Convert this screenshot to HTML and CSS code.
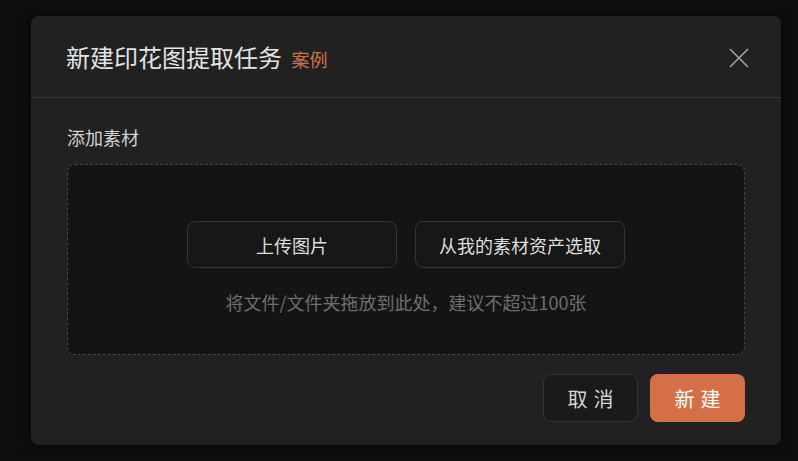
FILE: index.html
```html
<!DOCTYPE html>
<html lang="zh-CN">
<head>
    <meta charset="UTF-8">
    <meta name="viewport" content="width=device-width, initial-scale=1.0">
    <title>新建印花图提取任务</title>
    <link rel="stylesheet" href="styles.css">
</head>
<body>

<!-- The Modal -->
<div class="modal">

  <div class="modal-header">
    <h2 class="modal-title">新建印花图提取任务 <a class="example-link" href="#">案例</a></h2>
    <span class="close">
      <svg width="20" height="20" viewBox="0 0 20 20">
        <path d="M1 1 L19 19 M19 1 L1 19" stroke="#a3a3a3" stroke-width="1.6" fill="none"/>
      </svg>
    </span>
  </div>

  <div class="modal-body">
    <div class="field-label">添加素材</div>
    <div class="drop-zone">
      <div class="drop-actions">
        <button type="button" class="ghost-btn">上传图片</button>
        <button type="button" class="ghost-btn">从我的素材资产选取</button>
      </div>
      <p class="drop-hint">将文件/文件夹拖放到此处，建议不超过100张</p>
    </div>
  </div>

  <div class="modal-footer">
    <button type="button" class="btn btn-cancel">取消</button>
    <button type="button" class="btn btn-primary">新建</button>
  </div>

</div>

</body>
</html>
```

FILE: styles.css
```css
body {
    font-family: "Noto Sans CJK SC", "Noto Sans", sans-serif;
    background-color: #0e0e0e;
    margin: 0;
    padding: 16px 0 0 31px;
    height: 461px;
    box-sizing: border-box;
    overflow: hidden;
}
.modal {
    width: 750px;
    height: 429px;
    background-color: #212121;
    border-radius: 8px;
    box-shadow: 0 0 12px rgba(0, 0, 0, 0.6);
    display: flex;
    flex-direction: column;
}
.modal-header {
    display: flex;
    align-items: center;
    justify-content: space-between;
    height: 82px;
    padding: 2px 32px 0 35px;
    border-bottom: 1px solid #363636;
    box-sizing: border-box;
}
.modal-title {
    margin: 0;
    font-size: 24px;
    font-weight: normal;
    color: #e4e4e4;
    line-height: 30px;
}
.example-link {
    font-size: 18px;
    color: #d0704a;
    text-decoration: none;
    margin-left: 4px;
}
.close {
    display: flex;
    cursor: pointer;
}
.modal-body {
    padding: 27px 36px 0 36px;
}
.field-label {
    font-size: 18px;
    line-height: 24px;
    color: #d2d2d2;
    margin-bottom: 15px;
}
.drop-zone {
    height: 191px;
    box-sizing: border-box;
    border: 1px dashed #474747;
    border-radius: 8px;
    background-color: #141414;
    padding-top: 56px;
    text-align: center;
}
.drop-actions {
    display: flex;
    justify-content: center;
    gap: 18px;
}
.ghost-btn {
    width: 210px;
    height: 47px;
    font-family: inherit;
    font-size: 18px;
    color: #dedede;
    background-color: #171717;
    border: 1px solid #353535;
    border-radius: 8px;
    cursor: pointer;
}
.drop-hint {
    margin: 22px 0 0;
    font-size: 18px;
    line-height: 24px;
    color: #6e6e6e;
}
.modal-footer {
    display: flex;
    justify-content: flex-end;
    gap: 12px;
    padding: 19px 36px 0 0;
}
.btn {
    width: 95px;
    height: 48px;
    font-family: inherit;
    font-size: 20px;
    letter-spacing: 6px;
    padding: 0 0 0 6px;
    border-radius: 8px;
    cursor: pointer;
}
.btn-cancel {
    background-color: #1a1a1a;
    color: #d6d6d6;
    border: 1px solid #333333;
}
.btn-primary {
    background-color: #d46f47;
    color: #ffffff;
    border: none;
}
```
